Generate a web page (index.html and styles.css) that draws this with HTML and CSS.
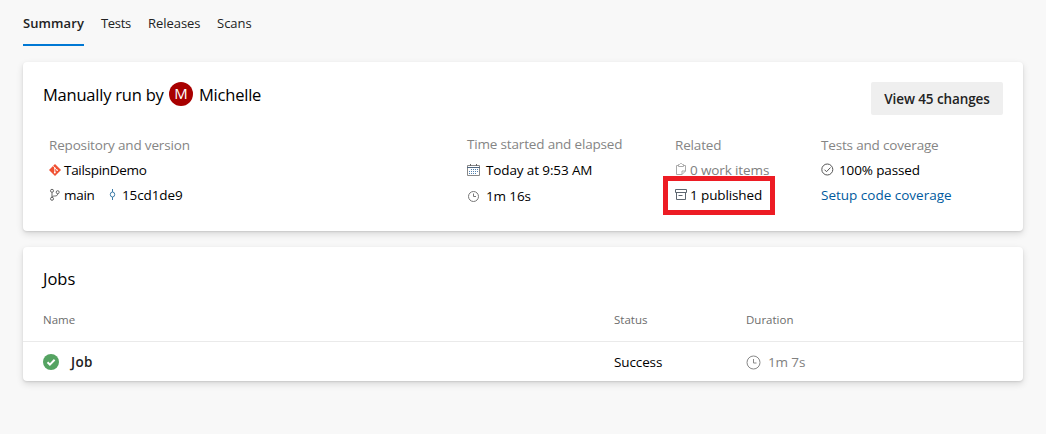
FILE: index.html
```html
<!DOCTYPE html>
<html lang="en">
<head>
<meta charset="utf-8">
<title>Pipeline run summary</title>
<link rel="stylesheet" href="styles.css">
</head>
<body>
<nav class="tabs">
  <a class="tab active">Summary</a>
  <a class="tab tests">Tests</a>
  <a class="tab releases">Releases</a>
  <a class="tab scans">Scans</a>
</nav>
<main>
  <section class="card summary">
    <header class="head">
      <h1 class="title"><span class="by">Manually run by</span><span class="avatar">M</span><span class="who">Michelle</span></h1>
      <button class="button">View 45 changes</button>
    </header>
    <div class="facts">
      <div class="col">
        <div class="label repo">Repository and version</div>
        <div class="line">
          <svg class="icon git" width="12" height="12" viewBox="0 0 12 12"><path d="M6 0l6 6-6 6-6-6z" fill="#f05133"/><path d="M4.300 2.200l1.500 1.600v4.600M5.800 4l2.400 2.200" stroke="#fff" stroke-width=".9" fill="none"/><circle cx="5.800" cy="4" r=".7" fill="#fff"/><circle cx="5.800" cy="8.500" r=".9" fill="#fff"/><circle cx="8.200" cy="6.200" r=".8" fill="#fff"/></svg>
          <span class="demo">TailspinDemo</span>
        </div>
        <div class="line">
          <svg class="icon branch" width="12" height="14" viewBox="0 0 12 14" fill="none" stroke="#666" stroke-width="1"><circle cx="3" cy="2.800" r="1.500"/><circle cx="3" cy="10.800" r="1.500"/><circle cx="8.700" cy="4.200" r="1.500"/><path d="M3 4.300v5M8.700 5.700c0 2-1.400 2.300-3 2.300-1.500 0-2.700.4-2.700 1.500"/></svg>
          <span class="main">main</span>
          <svg class="icon commit" width="8" height="14" viewBox="0 0 8 14" fill="none" stroke="#3c7ca8" stroke-width="1"><path d="M3.500 1v3M3.500 9v3"/><ellipse cx="3.500" cy="6.500" rx="2.200" ry="2.500"/></svg>
          <span class="hash">15cd1de9</span>
        </div>
      </div>
      <div class="col">
        <div class="label time">Time started and elapsed</div>
        <div class="line">
          <svg class="icon calendar" width="13" height="12" viewBox="0 0 13 12" fill="none"><path d="M.5 1.500h12v10H.5z" stroke="#888"/><path d="M0 3.500h13" stroke="#4f6680"/><path d="M3.500 0v2M9.500 0v2" stroke="#666"/><path d="M4 5.500h7M2 7.500h9M2 9.500h7" stroke="#5382b0" stroke-dasharray="1 1"/></svg>
          <span class="today">Today at 9:53 AM</span>
        </div>
        <div class="line elapsed">
          <svg class="icon clock" width="13" height="13" viewBox="0 0 13 13" fill="none" stroke="#777"><circle cx="6.500" cy="6.500" r="5"/><path d="M6.500 3.500v3h2.500"/></svg>
          <span class="mins">1m 16s</span>
        </div>
      </div>
      <div class="col">
        <div class="label related">Related</div>
        <div class="line muted">
          <svg class="icon clip" width="12" height="13" viewBox="0 0 12 13" fill="none" stroke="#aaa"><path d="M3.500 2.500h-2v9h5.500l3.500-3.500V2.500h-2M7 11.500V8h3.500M3.500 3.500v-2h1l1-1h1l1 1h1v2z"/></svg>
          <span class="items">0 work items</span>
        </div>
        <div class="line published">
          <svg class="icon box" width="12" height="12" viewBox="0 0 12 12" fill="none" stroke="#5d6670"><path d="M.5.5h11v3H.5zM1.500 3.500v7h9v-7M3.500 6.500h4"/></svg>
          <span class="pub">1 published</span>
        </div>
      </div>
      <div class="col">
        <div class="label coverage">Tests and coverage</div>
        <div class="line">
          <svg class="icon tick" width="13" height="13" viewBox="0 0 13 13" fill="none" stroke="#555"><circle cx="6.300" cy="6.500" r="5.500"/><path d="M3.500 6.700l2 2 4-4.200"/></svg>
          <span class="passed">100% passed</span>
        </div>
        <div class="line"><a class="setup">Setup code coverage</a></div>
      </div>
    </div>
  </section>
  <section class="card jobs">
    <h2 class="title jobs-title">Jobs</h2>
    <div class="row thead"><span class="name">Name</span><span class="status">Status</span><span class="duration">Duration</span></div>
    <div class="row tbody">
      <span class="cell"><svg class="icon success-dot" width="16" height="16" viewBox="0 0 16 16"><circle cx="8" cy="8" r="8" fill="#55a362"/><path d="M4.500 8.200l2.400 2.400 4.700-4.800" fill="none" stroke="#fff" stroke-width="2"/></svg><b class="job">Job</b></span>
      <span class="success">Success</span>
      <span class="cell muted"><svg class="icon" width="15" height="15" viewBox="0 0 15 15" fill="none" stroke="#888"><circle cx="7.500" cy="7.500" r="6.500"/><path d="M7.500 4v4H10.500"/></svg><span class="seven">1m 7s</span></span>
    </div>
  </section>
</main>
</body>
</html>
```
FILE: styles.css
```css
* { box-sizing: border-box; }
body { margin: 0; height: 434px; overflow: hidden; background: #f8f8f8; color: #000; font: 13.5px/25px "Open Sans", "Noto Sans", sans-serif; letter-spacing: -.12px; white-space: nowrap; }
h1, h2 { margin: 0; }
.tabs { display: flex; gap: 17px; height: 46px; padding-left: 23px; }
.tab { height: 46px; line-height: 46px; font-size: 13px; color: #222; }
.active { width: 61px; font-weight: 600; letter-spacing: .1px; border-bottom: 2px solid #0078d4; }
.tests { width: 30px; letter-spacing: -.3px; }
.releases { width: 52px; letter-spacing: -.05px; }
.scans { letter-spacing: 0; }
main { display: flex; flex-direction: column; gap: 16px; padding: 16px 23px 0; }
.card { background: #fff; border-radius: 4px; box-shadow: 0 3px 7px rgba(0,0,0,.13), 0 1px 2px rgba(0,0,0,.1); }
.summary { height: 169px; padding: 20px 20px 0; }
.head { display: flex; justify-content: space-between; }
.title { display: flex; align-items: center; height: 24px; font-size: 16.5px; line-height: 24px; font-weight: 400; letter-spacing: -.22px; }
.by { width: 121px; padding-top: 2px; }
.who { padding-top: 2px; }
.avatar { width: 24px; height: 24px; margin: 0 6px 0 5px; border-radius: 50%; background: #a80000; color: #fff; font-size: 15px; line-height: 23px; text-align: center; }
.button { width: 132px; height: 33px; padding: 2px 0 0; border: 0; border-radius: 2px; background: #efefef; color: #222; font: 600 13.5px/31px "Open Sans", "Noto Sans", sans-serif; letter-spacing: -.1px; }
.facts { display: grid; grid-template-columns: 418px 208px 146px 180px; padding: 18px 0 0 6px; }
.label { height: 25px; color: #858585; letter-spacing: -.17px; }
.time { margin-top: -1px; margin-bottom: 1px; }
.line { display: flex; align-items: center; height: 25px; }
.icon { display: block; flex: none; margin: 0 3px 0 0; }
.line .icon { margin-bottom: 2px; }
.line .clock { margin-bottom: 0; }
.demo { letter-spacing: -.3px; }
.main { width: 30px; letter-spacing: -.3px; }
.line .commit { margin: 0 5px 2px 15px; }
.today, .mins { margin-left: 3px; }
.passed { margin-left: 2px; }
.elapsed { padding-top: 1px; height: 26px; }
.muted { color: #808080; }
.published { position: relative; }
.published::after { content: ""; box-sizing: border-box; position: absolute; left: -12px; top: -7px; width: 112px; height: 39px; border: 5px solid #ed1c24; }
.setup { color: #005a9e; letter-spacing: 0; }
.jobs { height: 134px; }
.jobs-title { padding: 18px 20px 0; height: 45px; letter-spacing: 0; }
.row { display: grid; grid-template-columns: 571px 132px 1fr; padding: 0 20px; }
.thead { height: 50px; line-height: 56px; border-bottom: 1px solid #eaeaea; color: #6c6c6c; font-size: 11.5px; font-weight: 500; letter-spacing: 0; }
.tbody { height: 39px; line-height: 41px; }
.cell { display: flex; align-items: center; height: 41px; }
.success-dot { margin-bottom: 1px; }
.job { margin-left: 9px; color: #222; font-weight: 600; letter-spacing: .4px; }
.seven { margin-left: 4px; }
```
